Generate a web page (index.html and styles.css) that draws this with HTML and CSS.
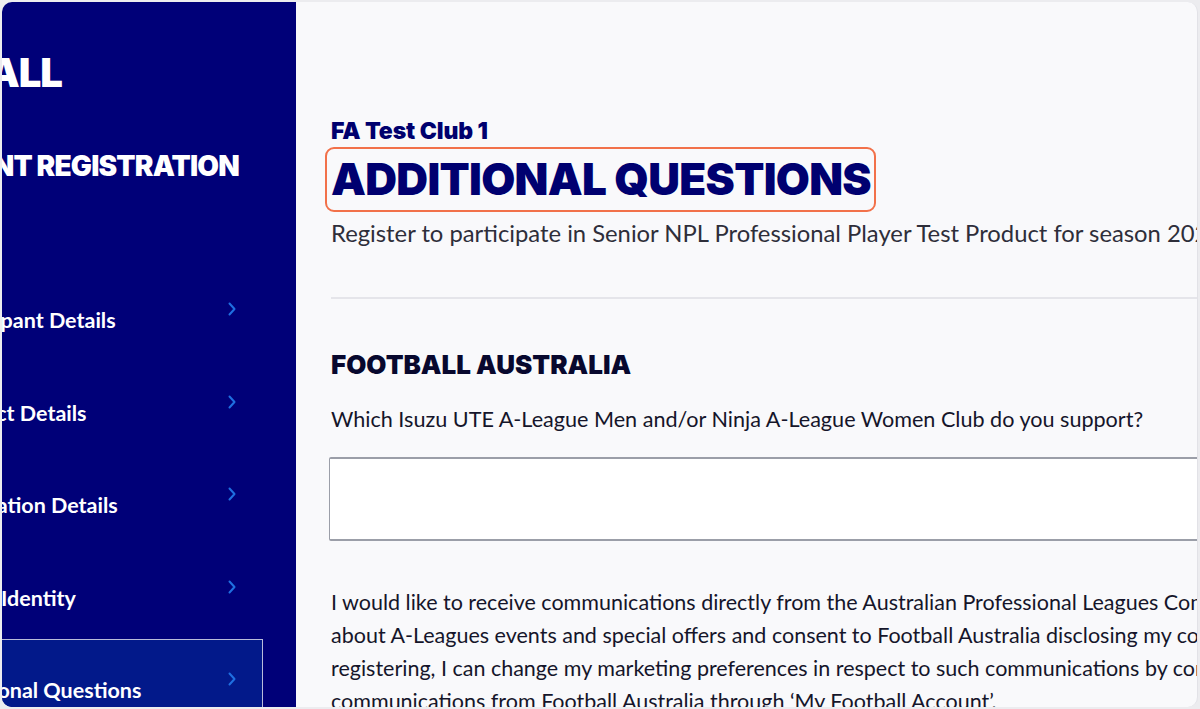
FILE: index.html
```html
<!DOCTYPE html>
<html lang="en">
<head>
<meta charset="utf-8">
<title>Additional Questions</title>
<link rel="stylesheet" href="styles.css">
</head>
<body>
<div class="frame">
  <aside class="sidebar">
    <div class="logo"><span>FOOTBALL</span></div>
    <div class="title"><span>PARTICIPANT REGISTRATION</span></div>
    <nav class="nav">
      <div class="nav-item"><span class="label">Participant Details</span><svg class="chev" width="8" height="14" viewBox="0 0 8 14"><path d="M1.5 1.5 L6.5 7 L1.5 12.5" fill="none" stroke="#1f6fe0" stroke-width="2" stroke-linecap="round" stroke-linejoin="round"/></svg></div>
      <div class="nav-item"><span class="label">Contact Details</span><svg class="chev" width="8" height="14" viewBox="0 0 8 14"><path d="M1.5 1.5 L6.5 7 L1.5 12.5" fill="none" stroke="#1f6fe0" stroke-width="2" stroke-linecap="round" stroke-linejoin="round"/></svg></div>
      <div class="nav-item"><span class="label label-reg">Registration Details</span><svg class="chev" width="8" height="14" viewBox="0 0 8 14"><path d="M1.5 1.5 L6.5 7 L1.5 12.5" fill="none" stroke="#1f6fe0" stroke-width="2" stroke-linecap="round" stroke-linejoin="round"/></svg></div>
      <div class="nav-item"><span class="label label-id">Digital Identity</span><svg class="chev" width="8" height="14" viewBox="0 0 8 14"><path d="M1.5 1.5 L6.5 7 L1.5 12.5" fill="none" stroke="#1f6fe0" stroke-width="2" stroke-linecap="round" stroke-linejoin="round"/></svg></div>
      <div class="nav-item active"><span class="label">Additional Questions</span><svg class="chev" width="8" height="14" viewBox="0 0 8 14"><path d="M1.5 1.5 L6.5 7 L1.5 12.5" fill="none" stroke="#1f6fe0" stroke-width="2" stroke-linecap="round" stroke-linejoin="round"/></svg></div>
    </nav>
  </aside>
  <main class="main">
    <div class="club">FA Test Club 1</div>
    <h1 class="page-title">ADDITIONAL QUESTIONS</h1>
    <p class="intro">Register to participate in Senior NPL Professional Player Test Product for season 2024</p>
    <hr class="divider">
    <h2 class="section">FOOTBALL AUSTRALIA</h2>
    <p class="question">Which Isuzu UTE A-League Men and/or Ninja A-League Women Club do you support?</p>
    <div class="input"></div>
    <p class="consent">I would like to receive communications directly from the Australian Professional Leagues Company (APL)<br>about A-Leagues events and special offers and consent to Football Australia disclosing my contact details<br>registering, I can change my marketing preferences in respect to such communications by contacting the APL<br>communications from Football Australia through ‘My Football Account’.</p>
  </main>
</div>
</body>
</html>
```
FILE: styles.css
```css
html, body {
  margin: 0;
  padding: 0;
}
body {
  background: #ececef;
  width: 1200px;
  height: 709px;
  overflow: hidden;
  font-family: Lato, "Liberation Sans", sans-serif;
}
.frame {
  margin: 2px;
  width: 1196px;
  height: 705px;
  box-sizing: border-box;
  border-right: 1px solid #e2e2e7;
  border-radius: 10px;
  overflow: hidden;
  display: flex;
  background: #f9f9fb;
}
.sidebar {
  width: 294px;
  flex: none;
  background: #000078;
  color: #fff;
  display: flex;
  flex-direction: column;
}
.logo, .title {
  display: flex;
  justify-content: flex-end;
  white-space: nowrap;
  font-family: Inter, "Liberation Sans", sans-serif;
  font-weight: 900;
}
.logo {
  width: 60px;
  margin-top: 47px;
  font-size: 40px;
  line-height: 48px;
  letter-spacing: -1px;
}
.title {
  width: 237px;
  margin-top: 52px;
  font-size: 28px;
  line-height: 34px;
  letter-spacing: -0.8px;
}
.nav {
  margin-top: 86px;
  margin-right: 33px;
}
.nav-item {
  height: 92.5px;
  box-sizing: border-box;
  padding: 38px 27px 0 0;
  display: flex;
  justify-content: space-between;
  align-items: flex-start;
}
.nav-item.active {
  background: #02198a;
  border: 1px solid #b9bcda;
  border-left: none;
  padding-top: 37px;
  padding-right: 26px;
}
.label {
  margin-left: -63px;
  font-size: 21.5px;
  font-weight: 700;
  line-height: 26px;
  white-space: nowrap;
}
.label-reg {
  margin-left: -72px;
}
.label-id {
  margin-left: -69px;
}
.chev {
  margin-top: -5px;
  flex: none;
}
.main {
  flex: 1;
  min-width: 0;
  padding-left: 35px;
  overflow: hidden;
}
.club {
  margin-top: 115px;
  font-family: Inter, "Liberation Sans", sans-serif;
  font-weight: 900;
  font-size: 23px;
  line-height: 28px;
  letter-spacing: -0.1px;
  color: #00006e;
}
.page-title {
  display: inline-block;
  margin: 2px 0 0 -6px;
  padding: 4px 3px 4px 4px;
  border: 2px solid #f2714a;
  border-radius: 9px;
  font-family: Inter, "Liberation Sans", sans-serif;
  font-weight: 900;
  font-size: 44px;
  line-height: 53px;
  letter-spacing: -0.7px;
  color: #000070;
  white-space: nowrap;
}
.intro {
  margin: 7px 0 0;
  font-size: 23.8px;
  line-height: 28px;
  color: #2e2e3a;
  white-space: nowrap;
}
.divider {
  margin: 50px 0 0;
  border: none;
  border-top: 2px solid #e5e5ea;
}
.section {
  margin: 50px 0 0;
  font-family: Inter, "Liberation Sans", sans-serif;
  font-weight: 900;
  font-size: 26px;
  line-height: 32px;
  letter-spacing: 0;
  color: #08082e;
}
.question {
  margin: 25px 0 0;
  font-size: 21.6px;
  line-height: 26px;
  color: #15152a;
  white-space: nowrap;
}
.input {
  margin: 25px 0 0 -2px;
  width: 1000px;
  height: 80px;
  background: #fff;
  border: 1px solid #9b9ea8;
  border-top-width: 2px;
  border-bottom-width: 2px;
  border-radius: 2px;
}
.consent {
  margin: 45px 0 0;
  font-size: 21.5px;
  line-height: 33px;
  color: #15152a;
  white-space: nowrap;
}
```
